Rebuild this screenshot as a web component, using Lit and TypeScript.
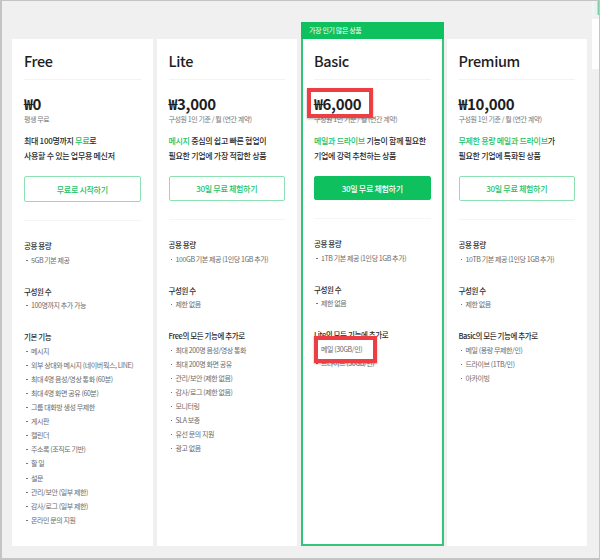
import { LitElement, html, css, nothing } from "lit";
import { customElement } from "lit/decorators.js";

interface Plan {
  name: string;
  price: string;
  sub: string;
  line1: unknown;
  line2: unknown;
  cta: string;
  storage: string;
  members: string;
  featTitle: string;
  features: string[];
  kind: string;
}

const PLANS: Plan[] = [
  {
    name: "Free",
    kind: "free",
    price: "₩0",
    sub: "평생 무료",
    line1: html`최대 100명까지 <em>무료</em>로`,
    line2: html`사용할 수 있는 업무용 메신저`,
    cta: "무료로 시작하기",
    storage: "5GB 기본 제공",
    members: "100명까지 추가 가능",
    featTitle: "기본 기능",
    features: [
      "메시지",
      "외부 상대와 메시지 (네이버웍스, LINE)",
      "최대 4명 음성/영상 통화 (60분)",
      "최대 4명 화면 공유 (60분)",
      "그룹 대화방 생성 무제한",
      "게시판",
      "캘린더",
      "주소록 (조직도 기반)",
      "할 일",
      "설문",
      "관리/보안 (일부 제한)",
      "감사/로그 (일부 제한)",
      "온라인 문의 지원",
    ],
  },
  {
    name: "Lite",
    kind: "lite",
    price: "₩3,000",
    sub: "구성원 1인 기준 / 월 (연간 계약)",
    line1: html`<em>메시지</em> 중심의 쉽고 빠른 협업이`,
    line2: html`필요한 기업에 가장 적합한 상품`,
    cta: "30일 무료 체험하기",
    storage: "100GB 기본 제공 (1인당 1GB 추가)",
    members: "제한 없음",
    featTitle: "Free의 모든 기능에 추가로",
    features: [
      "최대 200명 음성/영상 통화",
      "최대 200명 화면 공유",
      "관리/보안 (제한 없음)",
      "감사/로그 (제한 없음)",
      "모니터링",
      "SLA 보증",
      "유선 문의 지원",
      "광고 없음",
    ],
  },
  {
    name: "Basic",
    kind: "popular",
    price: "₩6,000",
    sub: "구성원 1인 기준 / 월 (연간 계약)",
    line1: html`<em>메일과 드라이브</em> 기능이 함께 필요한`,
    line2: html`기업에 강력 추천하는 상품`,
    cta: "30일 무료 체험하기",
    storage: "1TB 기본 제공 (1인당 1GB 추가)",
    members: "제한 없음",
    featTitle: "Lite의 모든 기능에 추가로",
    features: ["메일 (30GB/인)", "드라이브 (30GB/인)"],
  },
  {
    name: "Premium",
    kind: "premium",
    price: "₩10,000",
    sub: "구성원 1인 기준 / 월 (연간 계약)",
    line1: html`<em>무제한 용량 메일과 드라이브</em>가`,
    line2: html`필요한 기업에 특화된 상품`,
    cta: "30일 무료 체험하기",
    storage: "10TB 기본 제공 (1인당 1GB 추가)",
    members: "제한 없음",
    featTitle: "Basic의 모든 기능에 추가로",
    features: ["메일 (용량 무제한/인)", "드라이브 (1TB/인)", "아카이빙"],
  },
];

@customElement("app-root")
export class AppRoot extends LitElement {
  static styles = css`
    :host {
      display: block;
      width: 600px;
      height: 560px;
      font-family: "Noto Sans CJK KR", "Noto Sans", sans-serif;
      color: #1e1e1e;
    }
    .frame {
      position: relative;
      box-sizing: border-box;
      width: 600px;
      height: 560px;
      background: #f0f0f0;
      border: solid #c4c4c4;
      border-width: 1px 1px 2px 2px;
      display: flex;
      align-items: flex-end;
      gap: 4px;
      padding: 0 12px 12px 10px;
    }
    .card {
      box-sizing: border-box;
      flex: 1 1 0;
      min-width: 0;
      height: 507px;
      background: #fff;
      padding: 0 12px;
    }
    .card.popular {
      height: 524px;
      border-style: solid;
      border-color: #34c47a;
      border-width: 0 2px 2px 2px;
      padding: 0 11px;
      margin: 0 -1px 0 0;
    }
    .flag {
      height: 17px;
      margin: 0 -13px;
      padding-left: 8px;
      background: #0fc05e;
      color: #fff;
      font-size: 7px;
      letter-spacing: -0.35px;
      line-height: 17px;
    }
    .name {
      height: 40px;
      font-size: 14.5px;
      font-weight: 500;
      letter-spacing: -0.35px;
      line-height: 44px;
      border-bottom: 1px solid #f3f3f3;
    }
    .price {
      margin-top: 14px;
      font-size: 15px;
      font-weight: 700;
      letter-spacing: -0.3px;
      line-height: 20px;
      height: 20px;
    }
    .sub {
      font-size: 7px;
      letter-spacing: -0.4px;
      line-height: 11px;
      color: #777;
      height: 11px;
    }
    .desc {
      margin-top: 9px;
      font-size: 8px;
      font-weight: 500;
      letter-spacing: -0.3px;
      line-height: 14.5px;
      height: 29px;
      white-space: nowrap;
      color: #2a2a2a;
    }
    em {
      font-style: normal;
      color: #19c265;
    }
    .cta {
      display: flex;
      align-items: center;
      justify-content: center;
      margin-top: 13px;
      height: 25px;
      box-sizing: border-box;
      border: 1px solid #8ee0b3;
      border-radius: 2px;
      font-size: 8px;
      font-weight: 500;
      letter-spacing: -0.3px;
      color: #19c265;
    }
    .free .cta {
      height: 26px;
    }
    .popular .cta {
      height: 24px;
      background: #0fc05e;
      border-color: #0fc05e;
      color: #fff;
    }
    .rule {
      margin-top: 18px;
      border-top: 1px solid #f5f5f5;
    }
    .group {
      margin-top: 18px;
    }
    .title {
      font-size: 7.5px;
      font-weight: 500;
      letter-spacing: -0.4px;
      line-height: 13.5px;
      color: #2a2a2a;
      white-space: nowrap;
    }
    ul {
      list-style: none;
      margin: 0;
      padding: 0;
    }
    li {
      position: relative;
      padding-left: 7px;
      font-size: 7px;
      letter-spacing: -0.4px;
      line-height: 14.1px;
      color: #6a6a6a;
      white-space: nowrap;
    }
    li::before {
      content: "";
      position: absolute;
      left: 2px;
      top: 7px;
      width: 1.5px;
      height: 1px;
      background: #777;
    }
    .mark {
      position: absolute;
      box-sizing: border-box;
      border: 4px solid #ee3e45;
      box-shadow: 0 1px 2px rgba(0, 0, 0, 0.3);
      pointer-events: none;
    }
    .mark.price-mark {
      left: 305px;
      top: 87px;
      width: 66px;
      height: 30px;
    }
    .mark.mail-mark {
      left: 312px;
      top: 335px;
      width: 63px;
      height: 27px;
    }
    .edge {
      position: absolute;
      left: 590px;
      top: 18px;
      width: 7px;
      height: 50px;
      background: #fff;
    }
    .edge-top {
      position: absolute;
      left: 590px;
      top: 0;
      width: 7px;
      height: 14px;
      background: linear-gradient(to right, #f4f4f4, #e4f3ec 70%, #5fbf95);
    }
  `;

  render() {
    return html`<div class="frame">
      ${PLANS.map(
        (p) => html`<section class="card ${p.kind}">
          ${p.kind === "popular" ? html`<div class="flag">가장 인기 많은 상품</div>` : nothing}
          <div class="name">${p.name}</div>
          <div class="price">${p.price}</div>
          <div class="sub">${p.sub}</div>
          <div class="desc">${p.line1}<br />${p.line2}</div>
          <div class="cta">${p.cta}</div>
          <div class="rule"></div>
          <div class="group">
            <div class="title">공용 용량</div>
            <ul><li>${p.storage}</li></ul>
          </div>
          <div class="group">
            <div class="title">구성원 수</div>
            <ul><li>${p.members}</li></ul>
          </div>
          <div class="group">
            <div class="title">${p.featTitle}</div>
            <ul>${p.features.map((f) => html`<li>${f}</li>`)}</ul>
          </div>
        </section>`
      )}
      <div class="mark price-mark"></div>
      <div class="mark mail-mark"></div>
      <div class="edge-top"></div>
      <div class="edge"></div>
    </div>`;
  }
}
